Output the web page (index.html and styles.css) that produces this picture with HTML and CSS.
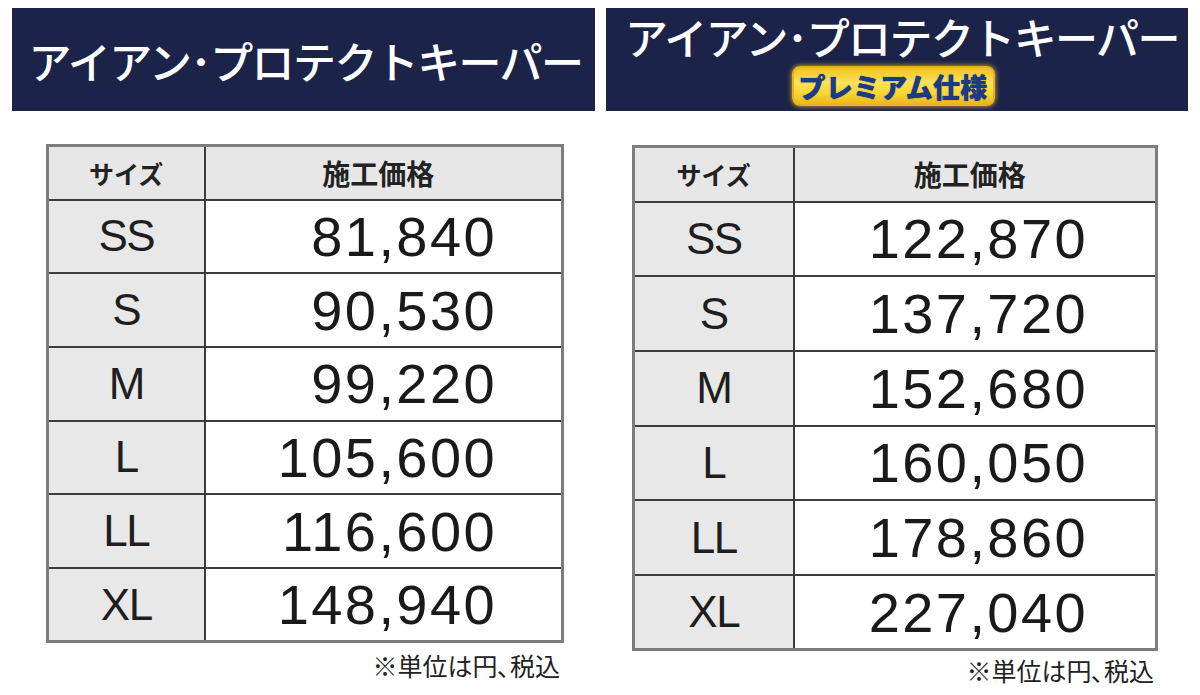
FILE: index.html
```html
<!DOCTYPE html>
<html lang="ja">
<head>
<meta charset="utf-8">
<title>アイアン・プロテクトキーパー 料金表</title>
<link rel="stylesheet" href="styles.css">
</head>
<body>
<div class="page">
  <section class="panel panel-left">
    <header class="banner">
      <h1 class="title">アイアン･プロテクトキーパー</h1>
    </header>
    <table class="price-table">
      <thead>
        <tr><th class="size-col">サイズ</th><th class="price-col">施工価格</th></tr>
      </thead>
      <tbody>
        <tr><td class="size">SS</td><td class="price">81,840</td></tr>
        <tr><td class="size">S</td><td class="price">90,530</td></tr>
        <tr><td class="size">M</td><td class="price">99,220</td></tr>
        <tr><td class="size">L</td><td class="price">105,600</td></tr>
        <tr><td class="size">LL</td><td class="price">116,600</td></tr>
        <tr><td class="size">XL</td><td class="price">148,940</td></tr>
      </tbody>
    </table>
    <p class="note">※単位は円､税込</p>
  </section>

  <section class="panel panel-right">
    <header class="banner banner-premium">
      <h1 class="title">アイアン･プロテクトキーパー</h1>
      <span class="badge">プレミアム仕様</span>
    </header>
    <table class="price-table">
      <thead>
        <tr><th class="size-col">サイズ</th><th class="price-col">施工価格</th></tr>
      </thead>
      <tbody>
        <tr><td class="size">SS</td><td class="price">122,870</td></tr>
        <tr><td class="size">S</td><td class="price">137,720</td></tr>
        <tr><td class="size">M</td><td class="price">152,680</td></tr>
        <tr><td class="size">L</td><td class="price">160,050</td></tr>
        <tr><td class="size">LL</td><td class="price">178,860</td></tr>
        <tr><td class="size">XL</td><td class="price">227,040</td></tr>
      </tbody>
    </table>
    <p class="note">※単位は円､税込</p>
  </section>
</div>
</body>
</html>
```

FILE: styles.css
```css
* { box-sizing: border-box; }

html, body {
  margin: 0;
  padding: 0;
  background: #ffffff;
}

body {
  width: 1200px;
  height: 695px;
  overflow: hidden;
  font-family: "Noto Sans CJK JP", "Liberation Sans", sans-serif;
  color: #1e1e1e;
}

.page {
  display: flex;
  gap: 11px;
  padding: 8px 0 0 12px;
}

.panel {
  display: flex;
  flex-direction: column;
}

.panel-left { width: 583px; }
.panel-right { width: 582px; }

.banner {
  height: 103px;
  background: #1b2349;
  display: flex;
  flex-direction: column;
  align-items: center;
  justify-content: center;
}

.title {
  margin: 0;
  color: #ffffff;
  font-family: "Noto Sans CJK JP", sans-serif;
  font-weight: 500;
  font-size: 43px;
  line-height: 1;
  letter-spacing: -1.6px;
  white-space: nowrap;
}

.panel-left .title {
  margin-left: 4px;
  padding-top: 2px;
}

.banner-premium {
  justify-content: flex-start;
  padding-top: 7px;
}

.banner-premium .title {
  margin-left: 10px;
}

.badge {
  margin-top: 8px;
  margin-right: 8px;
  width: 203px;
  height: 40px;
  border-radius: 8px;
  background: linear-gradient(180deg, #f2c21e 0%, #fbe25a 40%, #f8d636 70%, #ebb818 100%);
  border: 2px solid #e6b020;
  box-shadow: 0 0 4px 1px rgba(240, 185, 40, 0.7);
  display: flex;
  align-items: center;
  justify-content: center;
  color: #1b3a8a;
  font-family: "Noto Sans CJK JP", sans-serif;
  font-weight: 900;
  font-size: 27px;
  line-height: 1;
  letter-spacing: 0.3px;
  text-shadow: 0 0 1px #0e2256;
}

.price-table {
  border-collapse: collapse;
  border: 3px solid #7d7d7d;
  table-layout: fixed;
}

.panel-left .price-table {
  margin: 33px 0 0 34px;
  width: 518px;
}

.panel-right .price-table {
  margin: 34px 0 0 26px;
  width: 526px;
}

.price-table th,
.price-table td {
  border: 2px solid #3c3c3c;
  padding: 0;
}

.price-table th {
  background: #e7e7e7;
  font-family: "Noto Sans CJK JP", sans-serif;
  font-weight: 700;
  color: #222222;
  text-align: center;
}

th.size-col { font-size: 25px; }
th.price-col { font-size: 28px; padding-right: 10px; }

.panel-left th.size-col { width: 157px; }
.panel-right th.size-col { width: 160px; }

.panel-left thead tr { height: 54px; }
.panel-right thead tr { height: 55px; }

.panel-left tbody tr { height: 73.7px; }
.panel-right tbody tr { height: 74.7px; }

.size {
  background: #e8e8e8;
  text-align: center;
  font-family: "Liberation Sans", Arial, sans-serif;
  font-size: 44px;
  letter-spacing: -1.5px;
  color: #1e1e1e;
}

.price {
  background: #ffffff;
  text-align: right;
  font-family: "Liberation Sans", Arial, sans-serif;
  font-size: 56px;
  letter-spacing: 2.4px;
  color: #1a1a1a;
}

.panel-left .price { padding-right: 64px; }
.panel-right .price { padding-right: 67px; }

.note {
  margin: 0;
  font-family: "Noto Sans CJK JP", sans-serif;
  font-size: 25px;
  line-height: 1;
  color: #222222;
  text-align: right;
  white-space: nowrap;
}

.panel-left .note {
  margin-top: 10px;
  padding-right: 35px;
}

.panel-right .note {
  margin-top: 7px;
  padding-right: 34px;
}
```
